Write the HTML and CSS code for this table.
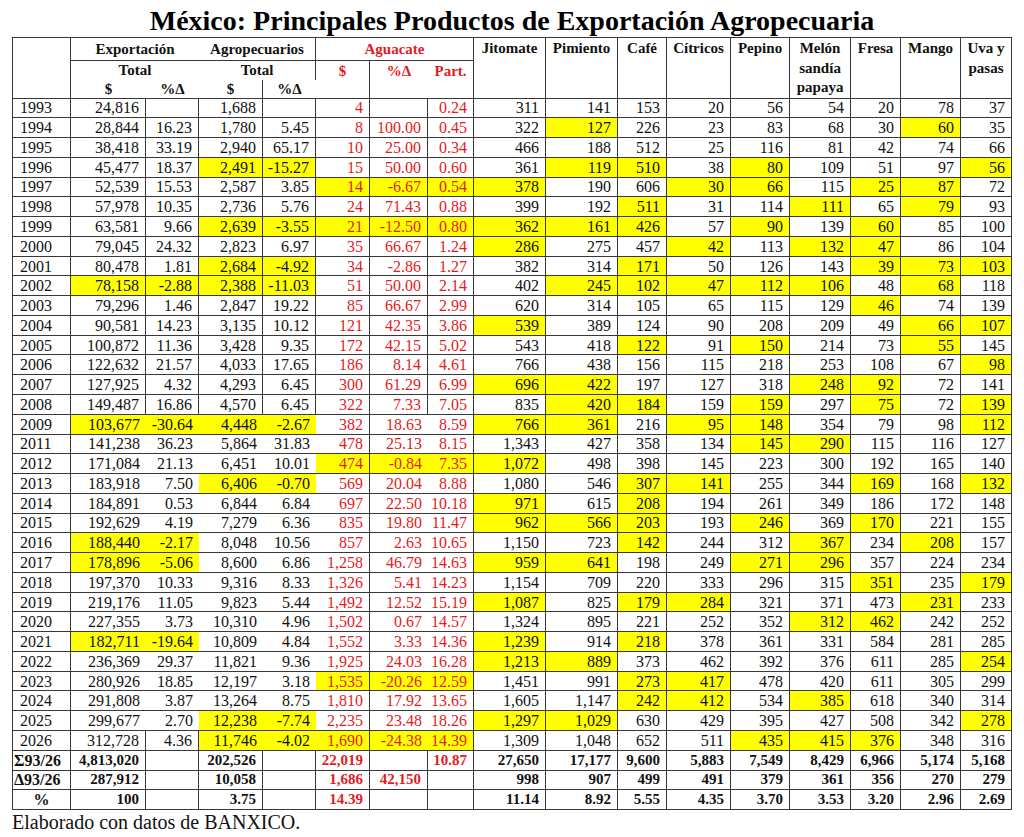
FILE: index.html
```html
<!DOCTYPE html>
<html lang="es">
<head>
<meta charset="utf-8">
<title>México: Principales Productos de Exportación Agropecuaria</title>
<link rel="stylesheet" href="styles.css">
</head>
<body>
<h1 class="title">México: Principales Productos de Exportación Agropecuaria</h1>
<table class="data">
<colgroup>
<col class="w58"><col class="w75"><col class="w53"><col class="w64"><col class="w53"><col class="w54"><col class="w58"><col class="w46"><col class="w72"><col class="w72"><col class="w49"><col class="w64"><col class="w59"><col class="w61"><col class="w50"><col class="w60"><col class="w51">
</colgroup>
<thead>
<tr class="h1">
<th rowspan="3"></th>
<th colspan="2" class="nr">Exportación</th>
<th colspan="2">Agropecuarios</th>
<th colspan="3" class="red">Aguacate</th>
<th rowspan="3" class="prod">Jitomate</th>
<th rowspan="3" class="prod">Pimiento</th>
<th rowspan="3" class="prod">Café</th>
<th rowspan="3" class="prod">Cítricos</th>
<th rowspan="3" class="prod">Pepino</th>
<th rowspan="3" class="prod">Melón<br>sandía<br>papaya</th>
<th rowspan="3" class="prod">Fresa</th>
<th rowspan="3" class="prod">Mango</th>
<th rowspan="3" class="prod">Uva y<br>pasas</th>
</tr>
<tr class="h2">
<th colspan="2" class="nr nb">Total</th>
<th colspan="2" class="nb">Total</th>
<th rowspan="2" class="red top">$</th>
<th rowspan="2" class="red top nr">%Δ</th>
<th rowspan="2" class="red top">Part.</th>
</tr>
<tr class="h3">
<th class="nr">$</th>
<th class="nr">%Δ</th>
<th>$</th>
<th class="nr">%Δ</th>
</tr>
</thead>
<tbody>
<tr><td>1993</td><td>24,816</td><td></td><td>1,688</td><td></td><td>4</td><td></td><td>0.24</td><td>311</td><td>141</td><td>153</td><td>20</td><td>56</td><td>54</td><td>20</td><td>78</td><td>37</td></tr>
<tr><td>1994</td><td>28,844</td><td>16.23</td><td>1,780</td><td>5.45</td><td>8</td><td>100.00</td><td>0.45</td><td>322</td><td class="y">127</td><td>226</td><td>23</td><td>83</td><td>68</td><td>30</td><td class="y">60</td><td>35</td></tr>
<tr><td>1995</td><td>38,418</td><td>33.19</td><td>2,940</td><td>65.17</td><td>10</td><td>25.00</td><td>0.34</td><td>466</td><td>188</td><td>512</td><td>25</td><td>116</td><td>81</td><td>42</td><td>74</td><td>66</td></tr>
<tr><td>1996</td><td>45,477</td><td>18.37</td><td class="y">2,491</td><td class="y">-15.27</td><td>15</td><td>50.00</td><td>0.60</td><td>361</td><td class="y">119</td><td class="y">510</td><td>38</td><td class="y">80</td><td>109</td><td>51</td><td>97</td><td class="y">56</td></tr>
<tr><td>1997</td><td>52,539</td><td>15.53</td><td>2,587</td><td>3.85</td><td class="y">14</td><td class="y">-6.67</td><td class="y">0.54</td><td class="y">378</td><td>190</td><td>606</td><td class="y">30</td><td class="y">66</td><td>115</td><td class="y">25</td><td class="y">87</td><td>72</td></tr>
<tr><td>1998</td><td>57,978</td><td>10.35</td><td>2,736</td><td>5.76</td><td>24</td><td>71.43</td><td>0.88</td><td>399</td><td>192</td><td class="y">511</td><td>31</td><td>114</td><td class="y">111</td><td>65</td><td class="y">79</td><td>93</td></tr>
<tr><td>1999</td><td>63,581</td><td>9.66</td><td class="y">2,639</td><td class="y">-3.55</td><td class="y">21</td><td class="y">-12.50</td><td class="y">0.80</td><td class="y">362</td><td class="y">161</td><td class="y">426</td><td>57</td><td class="y">90</td><td>139</td><td class="y">60</td><td>85</td><td>100</td></tr>
<tr><td>2000</td><td>79,045</td><td>24.32</td><td>2,823</td><td>6.97</td><td>35</td><td>66.67</td><td>1.24</td><td class="y">286</td><td>275</td><td>457</td><td class="y">42</td><td>113</td><td class="y">132</td><td class="y">47</td><td>86</td><td>104</td></tr>
<tr><td>2001</td><td>80,478</td><td>1.81</td><td class="y">2,684</td><td class="y">-4.92</td><td>34</td><td>-2.86</td><td>1.27</td><td>382</td><td>314</td><td class="y">171</td><td>50</td><td>126</td><td>143</td><td class="y">39</td><td class="y">73</td><td class="y">103</td></tr>
<tr><td>2002</td><td class="y">78,158</td><td class="y">-2.88</td><td class="y">2,388</td><td class="y">-11.03</td><td>51</td><td>50.00</td><td>2.14</td><td>402</td><td class="y">245</td><td class="y">102</td><td class="y">47</td><td class="y">112</td><td class="y">106</td><td>48</td><td class="y">68</td><td>118</td></tr>
<tr><td>2003</td><td>79,296</td><td>1.46</td><td>2,847</td><td>19.22</td><td>85</td><td>66.67</td><td>2.99</td><td>620</td><td>314</td><td>105</td><td>65</td><td>115</td><td>129</td><td class="y">46</td><td>74</td><td>139</td></tr>
<tr><td>2004</td><td>90,581</td><td>14.23</td><td>3,135</td><td>10.12</td><td>121</td><td>42.35</td><td>3.86</td><td class="y">539</td><td>389</td><td>124</td><td>90</td><td>208</td><td>209</td><td>49</td><td class="y">66</td><td class="y">107</td></tr>
<tr><td>2005</td><td>100,872</td><td>11.36</td><td>3,428</td><td>9.35</td><td>172</td><td>42.15</td><td>5.02</td><td>543</td><td>418</td><td class="y">122</td><td>91</td><td class="y">150</td><td>214</td><td>73</td><td class="y">55</td><td>145</td></tr>
<tr><td>2006</td><td>122,632</td><td>21.57</td><td>4,033</td><td>17.65</td><td>186</td><td>8.14</td><td>4.61</td><td>766</td><td>438</td><td>156</td><td>115</td><td>218</td><td>253</td><td>108</td><td>67</td><td class="y">98</td></tr>
<tr><td>2007</td><td>127,925</td><td>4.32</td><td>4,293</td><td>6.45</td><td>300</td><td>61.29</td><td>6.99</td><td class="y">696</td><td class="y">422</td><td>197</td><td>127</td><td>318</td><td class="y">248</td><td class="y">92</td><td>72</td><td>141</td></tr>
<tr><td>2008</td><td>149,487</td><td>16.86</td><td>4,570</td><td>6.45</td><td>322</td><td>7.33</td><td>7.05</td><td>835</td><td class="y">420</td><td class="y">184</td><td>159</td><td class="y">159</td><td>297</td><td class="y">75</td><td>72</td><td class="y">139</td></tr>
<tr class="s"><td>2009</td><td class="y">103,677</td><td class="y">-30.64</td><td class="y">4,448</td><td class="y">-2.67</td><td>382</td><td>18.63</td><td>8.59</td><td class="y">766</td><td class="y">361</td><td>216</td><td class="y">95</td><td class="y">148</td><td>354</td><td>79</td><td>98</td><td class="y">112</td></tr>
<tr class="s"><td>2011</td><td>141,238</td><td>36.23</td><td>5,864</td><td>31.83</td><td>478</td><td>25.13</td><td>8.15</td><td>1,343</td><td>427</td><td>358</td><td>134</td><td class="y">145</td><td class="y">290</td><td>115</td><td>116</td><td>127</td></tr>
<tr class="s"><td>2012</td><td>171,084</td><td>21.13</td><td>6,451</td><td>10.01</td><td class="y">474</td><td class="y">-0.84</td><td class="y">7.35</td><td class="y">1,072</td><td>498</td><td>398</td><td>145</td><td>223</td><td>300</td><td>192</td><td>165</td><td>140</td></tr>
<tr class="s"><td>2013</td><td>183,918</td><td>7.50</td><td class="y">6,406</td><td class="y">-0.70</td><td>569</td><td>20.04</td><td>8.88</td><td>1,080</td><td>546</td><td class="y">307</td><td class="y">141</td><td>255</td><td>344</td><td class="y">169</td><td>168</td><td class="y">132</td></tr>
<tr class="s"><td>2014</td><td>184,891</td><td>0.53</td><td>6,844</td><td>6.84</td><td>697</td><td>22.50</td><td>10.18</td><td class="y">971</td><td>615</td><td class="y">208</td><td>194</td><td>261</td><td>349</td><td>186</td><td>172</td><td>148</td></tr>
<tr class="s"><td>2015</td><td>192,629</td><td>4.19</td><td>7,279</td><td>6.36</td><td>835</td><td>19.80</td><td>11.47</td><td class="y">962</td><td class="y">566</td><td class="y">203</td><td>193</td><td class="y">246</td><td>369</td><td class="y">170</td><td>221</td><td>155</td></tr>
<tr class="s"><td>2016</td><td class="y">188,440</td><td class="y">-2.17</td><td>8,048</td><td>10.56</td><td>857</td><td>2.63</td><td>10.65</td><td>1,150</td><td>723</td><td class="y">142</td><td>244</td><td>312</td><td class="y">367</td><td>234</td><td class="y">208</td><td>157</td></tr>
<tr class="s"><td>2017</td><td class="y">178,896</td><td class="y">-5.06</td><td>8,600</td><td>6.86</td><td>1,258</td><td>46.79</td><td>14.63</td><td class="y">959</td><td class="y">641</td><td>198</td><td>249</td><td class="y">271</td><td class="y">296</td><td>357</td><td>224</td><td>234</td></tr>
<tr class="s"><td>2018</td><td>197,370</td><td>10.33</td><td>9,316</td><td>8.33</td><td>1,326</td><td>5.41</td><td>14.23</td><td>1,154</td><td>709</td><td>220</td><td>333</td><td>296</td><td>315</td><td class="y">351</td><td>235</td><td class="y">179</td></tr>
<tr class="s"><td>2019</td><td>219,176</td><td>11.05</td><td>9,823</td><td>5.44</td><td>1,492</td><td>12.52</td><td>15.19</td><td class="y">1,087</td><td>825</td><td class="y">179</td><td class="y">284</td><td>321</td><td>371</td><td>473</td><td class="y">231</td><td>233</td></tr>
<tr class="s"><td>2020</td><td>227,355</td><td>3.73</td><td>10,310</td><td>4.96</td><td>1,502</td><td>0.67</td><td>14.57</td><td>1,324</td><td>895</td><td>221</td><td>252</td><td>352</td><td class="y">312</td><td class="y">462</td><td>242</td><td>252</td></tr>
<tr class="s"><td>2021</td><td class="y">182,711</td><td class="y">-19.64</td><td>10,809</td><td>4.84</td><td>1,552</td><td>3.33</td><td>14.36</td><td class="y">1,239</td><td>914</td><td class="y">218</td><td>378</td><td>361</td><td>331</td><td>584</td><td>281</td><td>285</td></tr>
<tr class="s"><td>2022</td><td>236,369</td><td>29.37</td><td>11,821</td><td>9.36</td><td>1,925</td><td>24.03</td><td>16.28</td><td class="y">1,213</td><td class="y">889</td><td>373</td><td>462</td><td>392</td><td>376</td><td>611</td><td>285</td><td class="y">254</td></tr>
<tr class="s"><td>2023</td><td>280,926</td><td>18.85</td><td>12,197</td><td>3.18</td><td class="y">1,535</td><td class="y">-20.26</td><td class="y">12.59</td><td>1,451</td><td>991</td><td class="y">273</td><td class="y">417</td><td>478</td><td>420</td><td>611</td><td>305</td><td>299</td></tr>
<tr class="s"><td>2024</td><td>291,808</td><td>3.87</td><td>13,264</td><td>8.75</td><td>1,810</td><td>17.92</td><td>13.65</td><td>1,605</td><td>1,147</td><td class="y">242</td><td class="y">412</td><td>534</td><td class="y">385</td><td>618</td><td>340</td><td>314</td></tr>
<tr class="s"><td>2025</td><td>299,677</td><td>2.70</td><td class="y">12,238</td><td class="y">-7.74</td><td>2,235</td><td>23.48</td><td>18.26</td><td class="y">1,297</td><td class="y">1,029</td><td>630</td><td>429</td><td>395</td><td>427</td><td>508</td><td>342</td><td class="y">278</td></tr>
<tr class="t"><td>2026</td><td>312,728</td><td>4.36</td><td class="y">11,746</td><td class="y">-4.02</td><td class="y">1,690</td><td class="y">-24.38</td><td class="y">14.39</td><td>1,309</td><td>1,048</td><td>652</td><td>511</td><td class="y">435</td><td class="y">415</td><td class="y">376</td><td>348</td><td>316</td></tr>
<tr class="sum"><td>Σ93/26</td><td>4,813,020</td><td></td><td>202,526</td><td></td><td>22,019</td><td></td><td>10.87</td><td>27,650</td><td>17,177</td><td>9,600</td><td>5,883</td><td>7,549</td><td>8,429</td><td>6,966</td><td>5,174</td><td>5,168</td></tr>
<tr class="sum"><td>Δ93/26</td><td>287,912</td><td></td><td>10,058</td><td></td><td>1,686</td><td>42,150</td><td></td><td>998</td><td>907</td><td>499</td><td>491</td><td>379</td><td>361</td><td>356</td><td>270</td><td>279</td></tr>
<tr class="sum"><td class="center">%</td><td>100</td><td></td><td>3.75</td><td></td><td>14.39</td><td></td><td></td><td>11.14</td><td>8.92</td><td>5.55</td><td>4.35</td><td>3.70</td><td>3.53</td><td>3.20</td><td>2.96</td><td>2.69</td></tr>
</tbody>
</table>
<p class="source">Elaborado con datos de BANXICO.</p>
</body>
</html>
```
FILE: styles.css
```css
html, body {
  margin: 0;
  padding: 0;
  background: #ffffff;
}
body {
  width: 1024px;
  font-family: "Liberation Serif", "Times New Roman", serif;
  color: #111111;
}
.title {
  margin: 0;
  height: 37px;
  padding-top: 4px;
  box-sizing: border-box;
  font-size: 28px;
  line-height: 33px;
  font-weight: bold;
  text-align: center;
  color: #000000;
}
.data {
  margin-left: 12px;
  width: 1000px;
  table-layout: fixed;
  border-collapse: separate;
  border-spacing: 0;
  border-top: 1px solid #383838;
  border-left: 1px solid #383838;
}
.w46 { width: 46px; }
.w49 { width: 49px; }
.w50 { width: 50px; }
.w51 { width: 51px; }
.w53 { width: 53px; }
.w54 { width: 54px; }
.w58 { width: 58px; }
.w59 { width: 59px; }
.w60 { width: 60px; }
.w61 { width: 61px; }
.w64 { width: 64px; }
.w72 { width: 72px; }
.w75 { width: 75px; }
.data th,
.data td {
  border-right: 1px solid #383838;
  border-bottom: 1px solid #383838;
  padding: 0;
  overflow: visible;
  white-space: nowrap;
}
.data th {
  font-size: 15px;
  font-weight: bold;
  text-align: center;
  vertical-align: middle;
  line-height: 18px;
  color: #111111;
}
.data th.prod {
  vertical-align: top;
  line-height: 19.5px;
  padding-top: 1px;
}
.data th.top {
  vertical-align: top;
  padding-top: 1px;
}
.data th.nr { border-right: none; }
.data th.nb { border-bottom: none; }
.data th.red { color: #e31b23; }
.h1 { height: 23px; }
.h2 { height: 18px; }
.h3 { height: 19px; }

.data tbody tr { height: 19.78px; }
.data td {
  font-size: 16px;
  line-height: 17px;
  text-align: right;
  padding-right: 6px;
  vertical-align: middle;
}
.data td:first-child {
  text-align: left;
  padding-left: 7px;
  padding-right: 0;
}
.data td:nth-child(6),
.data td:nth-child(7),
.data td:nth-child(8) {
  color: #e31b23;
}
.data td.y { background: #ffff00; }

.data tr.s td:nth-child(2),
.data tr.s td:nth-child(3),
.data tr.s td:nth-child(4),
.data tr.s td:nth-child(5),
.data tr.s td:nth-child(7),
.data tr.t td:nth-child(4),
.data tr.t td:nth-child(5),
.data tr.t td:nth-child(7) {
  border-right: none;
}

.data tr.sum td {
  font-weight: bold;
  font-size: 15px;
}
.data tr.sum td:first-child {
  font-size: 16px;
  padding-left: 1px;
}
.data tr.sum td.center {
  text-align: center;
  padding-left: 0;
}

.source {
  margin: 0 0 0 12px;
  font-size: 20px;
  line-height: 24px;
  color: #111111;
}
```
